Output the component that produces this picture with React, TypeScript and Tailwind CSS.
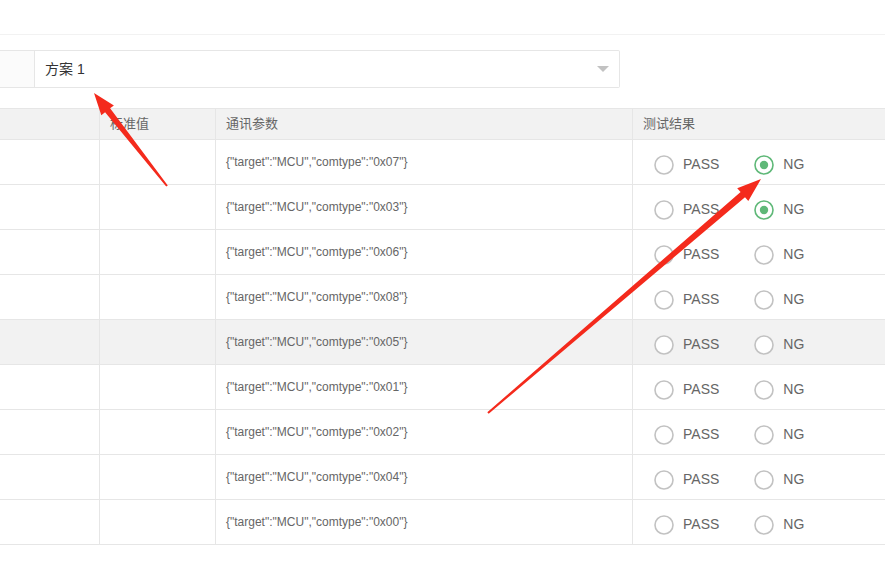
import React from 'react'

const font = { fontFamily: '"Liberation Sans", "Noto Sans CJK SC", sans-serif' }

const rows = [
  { code: '0x07', ng: true },
  { code: '0x03', ng: true },
  { code: '0x06', ng: false },
  { code: '0x08', ng: false },
  { code: '0x05', ng: false, hover: true },
  { code: '0x01', ng: false },
  { code: '0x02', ng: false },
  { code: '0x04', ng: false },
  { code: '0x00', ng: false },
]

function Radio({ checked, label }: { checked: boolean; label: string }) {
  return (
    <div className="flex items-center">
      <svg width="20" height="20" viewBox="0 0 20 20" className="shrink-0">
        <circle cx="10" cy="10" r="9" fill="#fff" stroke={checked ? '#5FB878' : '#c2c2c2'} strokeWidth="1.6" />
        {checked && <circle cx="10" cy="10" r="4.2" fill="#5FB878" />}
      </svg>
      <span className="ml-[9px] text-[14px] text-[#666]">{label}</span>
    </div>
  )
}

// tapered arrow polygon from tail to tip
function arrowPoints(tx: number, ty: number, hx: number, hy: number, headLen: number, headHalf: number, tailHalf: number, neckHalf: number) {
  const dx = hx - tx, dy = hy - ty
  const len = Math.hypot(dx, dy)
  const ux = dx / len, uy = dy / len
  const nx = -uy, ny = ux
  const bx = hx - ux * headLen, by = hy - uy * headLen
  const pts = [
    [tx + nx * tailHalf, ty + ny * tailHalf],
    [bx + nx * neckHalf, by + ny * neckHalf],
    [bx + nx * headHalf, by + ny * headHalf],
    [hx, hy],
    [bx - nx * headHalf, by - ny * headHalf],
    [bx - nx * neckHalf, by - ny * neckHalf],
    [tx - nx * tailHalf, ty - ny * tailHalf],
  ]
  return pts.map(p => p[0].toFixed(1) + ',' + p[1].toFixed(1)).join(' ')
}

export default function App() {
  return (
    <div className="relative w-[885px] h-[568px] bg-white overflow-hidden" style={font}>
      <div className="h-[35px] border-b border-[#f2f2f2]" />

      {/* scheme select */}
      <div className="pt-[15px] flex">
        <div className="w-[35px] h-[38px] bg-[#fbfbfb] border border-[#e6e6e6] border-l-0" />
        <div className="w-[585px] h-[38px] border border-l-0 border-[#e6e6e6] rounded-r-[2px] flex items-center justify-between pl-[10px] pr-[10px]">
          <span className="text-[14px] text-[#333]">方案 1</span>
          <span className="w-0 h-0 border-l-[6px] border-r-[6px] border-t-[6px] border-l-transparent border-r-transparent border-t-[#c2c2c2]" />
        </div>
      </div>

      {/* table */}
      <div className="mt-[20px] border-t border-[#e6e6e6] text-[#666]">
        <div className="flex h-[31px] bg-[#f2f2f2] border-b border-[#e6e6e6] text-[13px]">
          <div className="w-[100px] border-r border-[#e6e6e6]" />
          <div className="w-[116px] border-r border-[#e6e6e6] flex items-center pl-[10px]">标准值</div>
          <div className="w-[417px] border-r border-[#e6e6e6] flex items-center pl-[10px]">通讯参数</div>
          <div className="flex-1 flex items-center pl-[10px]">测试结果</div>
        </div>
        {rows.map(r => (
          <div key={r.code} className={'flex h-[45px] border-b border-[#e6e6e6] ' + (r.hover ? 'bg-[#f2f2f2]' : 'bg-white')}>
            <div className="w-[100px] border-r border-[#e6e6e6]" />
            <div className="w-[116px] border-r border-[#e6e6e6]" />
            <div className="w-[417px] border-r border-[#e6e6e6] flex items-center pl-[10px] text-[12px] pb-[1px]">
              {`{"target":"MCU","comtype":"${r.code}"}`}
            </div>
            <div className="flex-1 flex items-center pl-[21px] pt-[5px] gap-[35px]">
              <Radio checked={false} label="PASS" />
              <Radio checked={r.ng} label="NG" />
            </div>
          </div>
        ))}
      </div>

      {/* annotation arrows */}
      <svg className="absolute inset-0 pointer-events-none" width="885" height="568">
        <polygon points={arrowPoints(167, 186, 94, 93, 22, 8, 1, 3.2)} fill="#f42a1c" />
        <polygon points={arrowPoints(488, 413, 761, 179, 24, 8.5, 1, 3.4)} fill="#f42a1c" />
      </svg>
    </div>
  )
}
